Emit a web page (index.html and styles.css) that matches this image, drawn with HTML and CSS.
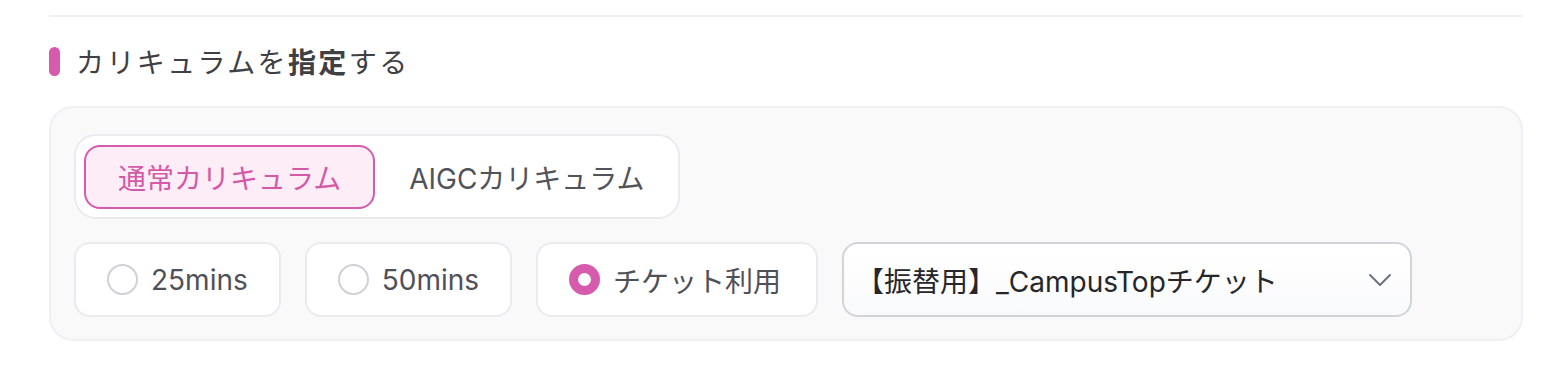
FILE: index.html
```html
<!DOCTYPE html>
<html>
    <head>
        <meta charset="utf-8">
        <title>カリキュラムを指定する</title>
        <link rel="stylesheet" href="styles.css">
    </head>
    <body>
        <div class="section">
            <hr class="divider">
            <h2 class="heading"><span class="mark"></span><span>カリキュラムを<b>指定</b>する</span></h2>
            <div class="panel">
                <div class="tabs">
                    <button class="tab active">通常カリキュラム</button>
                    <button class="tab">AIGCカリキュラム</button>
                </div>
                <div class="options">
                    <label class="option"><span class="radio"></span>25mins</label>
                    <label class="option"><span class="radio"></span>50mins</label>
                    <label class="option wide"><span class="radio checked"></span>チケット利用</label>
                    <div class="select">
                        <span class="value">【振替用】_CampusTopチケット</span>
                        <svg class="chevron" width="24" height="14" viewBox="0 0 24 14">
                            <path d="M2 2 L12 12 L22 2" fill="none" stroke="#6b7280" stroke-width="2" stroke-linecap="round" stroke-linejoin="round"/>
                        </svg>
                    </div>
                </div>
            </div>
        </div>
    </body>
</html>
```

FILE: styles.css
```css
html {
    background: #fff;
    font-family: "Inter", "Noto Sans CJK JP", sans-serif;
}

body {
    margin: 0;
}

.section {
    width: 1474px;
    margin-left: 49px;
    padding-top: 15px;
}

.divider {
    margin: 0;
    border: 0;
    height: 2px;
    background: #eef0f3;
}

.heading {
    display: flex;
    align-items: center;
    gap: 16px;
    margin: 29px 0 0;
    height: 30px;
    font-size: 28px;
    font-weight: normal;
    letter-spacing: 2.4px;
    color: #404044;
}

    .heading b {
        font-weight: bold;
    }

.mark {
    width: 11px;
    height: 29px;
    border-radius: 6px;
    background: #d65bad;
}

.panel {
    margin-top: 30px;
    padding: 26px 23px 22px;
    background: #f9f9f9;
    border: 2px solid #eef0f3;
    border-radius: 24px;
}

.tabs {
    display: inline-flex;
    padding: 9px 8px 8px;
    background: #fff;
    border: 2px solid #e9ebef;
    border-radius: 22px;
}

.tab {
    height: 64px;
    padding: 0 32px;
    font: inherit;
    font-size: 28px;
    color: #525259;
    background: none;
    border: 2px solid transparent;
    border-radius: 16px;
}

    .tab:last-child {
        padding-right: 23px;
    }

    .tab.active {
        color: #d45aa8;
        background: #fcedf6;
        border-color: #d65bad;
    }

.options {
    display: flex;
    gap: 24px;
    margin-top: 23px;
}

.option {
    display: flex;
    align-items: center;
    gap: 13px;
    height: 75px;
    box-sizing: border-box;
    padding: 0 31px;
    font-size: 28px;
    color: #505058;
    background: #fff;
    border: 2px solid #e9ebef;
    border-radius: 16px;
}

    .option.wide {
        padding-right: 35px;
    }

.radio {
    width: 31px;
    height: 31px;
    box-sizing: border-box;
    border: 2px solid #cfd1d6;
    border-radius: 50%;
    background: #fff;
}

    .radio.checked {
        border: 9px solid #d65bad;
    }

.select {
    display: flex;
    align-items: center;
    justify-content: space-between;
    width: 570px;
    height: 75px;
    box-sizing: border-box;
    padding: 0 18px 0 12px;
    font-size: 28px;
    color: #26262b;
    background: linear-gradient(#fff, #f9fafb);
    border: 2px solid #d1d4d9;
    border-radius: 16px;
}
```
